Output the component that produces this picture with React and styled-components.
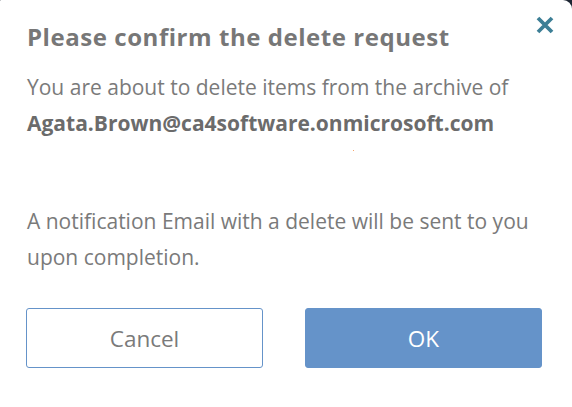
import React from 'react'
import styled, { createGlobalStyle } from 'styled-components'

const Global = createGlobalStyle`
  html, body {
    margin: 0;
    padding: 0;
    background: #1d2633;
  }
  body {
    font-family: "Open Sans", "Noto Sans", sans-serif;
  }
`

const Dialog = styled.div`
  position: relative;
  box-sizing: border-box;
  width: 572px;
  height: 407px;
  background: #fff;
  border-radius: 1px 9px 0 0;
  padding: 17px 29px 0 27px;
  color: #7a7a7a;
`

const Header = styled.div`
  display: flex;
  align-items: flex-start;
  justify-content: space-between;
`

const Title = styled.h2`
  margin: 0;
  font-size: 24px;
  font-weight: 700;
  letter-spacing: 0.55px;
  line-height: 40px;
  color: #777;
`

const Close = styled.button`
  border: 0;
  background: none;
  padding: 0;
  margin: -5px -15px 0 0;
  width: 26px;
  height: 26px;
  display: flex;
  align-items: center;
  justify-content: center;
  cursor: pointer;
`

const Text = styled.p`
  margin: ${p => p.$gap || '0'};
  font-size: 21px;
  line-height: 36px;
  color: #7a7a7a;
`

const Email = styled.strong`
  font-weight: 700;
  color: #6b6b6b;
`

const Speck = styled.span`
  position: absolute;
  left: 353px;
  top: 150px;
  width: 1px;
  height: 1px;
  background: #f7a46b;
`

const Actions = styled.div`
  display: flex;
  gap: 42px;
  margin: 33px 0 0 -1px;
`

const Button = styled.button`
  flex: 0 0 237px;
  height: 60px;
  box-sizing: border-box;
  border-radius: 3px;
  font-family: inherit;
  font-size: 22.5px;
  cursor: pointer;
  border: 1px solid #6593c9;
  background: ${p => (p.$primary ? '#6593c9' : '#fff')};
  color: ${p => (p.$primary ? '#fff' : '#7a7a7a')};
`

export default function App() {
  return (
    <>
      <Global />
      <Dialog>
        <Header>
          <Title>Please confirm the delete request</Title>
          <Close aria-label="Close">
            <svg width="20" height="20" viewBox="0 0 20 20">
              <path d="M3 3 L17 17 M17 3 L3 17" stroke="#3d7f96" strokeWidth="3.8" strokeLinecap="butt" />
            </svg>
          </Close>
        </Header>
        <Text $gap="12px 0 0">
          You are about to delete items from the archive of
          <br />
          <Email>Agata.Brown@ca4software.onmicrosoft.com</Email>
        </Text>
        <Speck />
        <Text $gap="62px 0 0">
          A notification Email with a delete will be sent to you upon completion.
        </Text>
        <Actions>
          <Button>Cancel</Button>
          <Button $primary>OK</Button>
        </Actions>
      </Dialog>
    </>
  )
}
